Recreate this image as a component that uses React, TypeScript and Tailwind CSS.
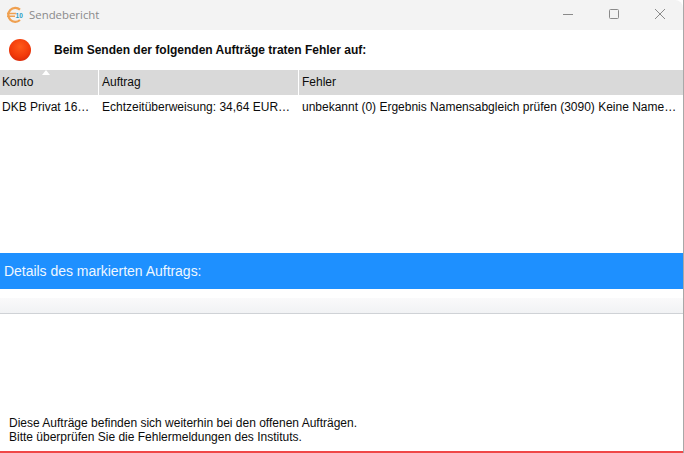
import React from "react";

function AppIcon() {
  return (
    <svg width="18" height="18" viewBox="0 0 18 18" className="shrink-0">
      <path d="M14 3.6A7 7 0 1 0 14 14" fill="none" stroke="#efa050" strokeWidth="2.2" />
      <path d="M1 7.6h9M1 10.2h8" stroke="#efa050" strokeWidth="1.5" fill="none" />
      <text x="9.6" y="12" fontSize="6.5" fontWeight="700" fill="#2a9bc4" style={{ fontFamily: '"Liberation Sans", sans-serif' }}>10</text>
    </svg>
  );
}

function Head({ w, children }: { w: string; children: React.ReactNode }) {
  return <div className={`${w} mr-[1px] shrink-0 self-stretch bg-[#d9d9d9] pl-[2px] leading-[25px]`}>{children}</div>;
}

export default function App() {
  return (
    <div
      className="relative flex h-[453px] w-[684px] flex-col overflow-hidden border-r border-[#a8a8a8] bg-white text-[12px] text-[#0c0c0c]"
      style={{ fontFamily: '"Liberation Sans", Arial, sans-serif' }}
    >
      <div className="flex h-[30px] shrink-0 items-center rounded-tr-lg bg-[#f3f3f3] pl-[6px]">
        <AppIcon />
        <span className="ml-[5px] text-[11.4px] text-[#8a8a8a]" style={{ fontFamily: '"Open Sans", sans-serif' }}>Sendebericht</span>
        <div className="ml-auto flex items-center pb-[2px]">
          <svg width="12" height="12" viewBox="0 0 12 12" className="mr-[34px]"><path d="M1 6.5h10" stroke="#8a8a8a" /></svg>
          <svg width="12" height="12" viewBox="0 0 12 12" className="mr-[34px]"><rect x="1.5" y="1.5" width="9" height="9" rx="1" fill="none" stroke="#8a8a8a" /></svg>
          <svg width="12" height="12" viewBox="0 0 12 12" className="mr-[17px]"><path d="M1 1l10 10M11 1L1 11" stroke="#8a8a8a" /></svg>
        </div>
      </div>

      <div className="flex h-[40px] shrink-0 items-center pl-[9px]">
        <div
          className="h-[22px] w-[22px] rounded-full"
          style={{ background: "radial-gradient(circle at 50% 35%, #ff5a1a 0%, #f23a0a 55%, #c81e08 100%)" }}
        />
        <span className="ml-[23px] font-bold">Beim Senden der folgenden Aufträge traten Fehler auf:</span>
      </div>

      <div className="relative flex h-[25px] shrink-0 items-center">
        <Head w="w-[98px]">Konto</Head>
        <div className="mr-[1px] w-[199px] shrink-0 self-stretch bg-[#d9d9d9] pl-[3px] leading-[25px]">Auftrag</div>
        <div className="flex-1 self-stretch bg-[#d9d9d9] pl-[3px] leading-[25px]">Fehler</div>
        <div className="absolute left-[42px] top-0 h-0 w-0 border-x-[4px] border-b-[5px] border-x-transparent border-b-white" />
      </div>

      <div className="flex h-[24px] shrink-0 items-center whitespace-nowrap">
        <div className="w-[99px] shrink-0 pl-[2px]">DKB Privat 16…</div>
        <div className="w-[200px] shrink-0 pl-[3px]">Echtzeitüberweisung: 34,64 EUR…</div>
        <div className="min-w-0 flex-1 pl-[3px]">unbekannt (0) Ergebnis Namensabgleich prüfen (3090) Keine Name…</div>
      </div>

      <div className="h-[134px] shrink-0" />

      <div className="flex h-[36px] shrink-0 items-center bg-[#1e90ff] pl-[4px] text-[14px] tracking-[-0.03px] text-[#eef7ff]">
        Details des markierten Auftrags:
      </div>

      <div className="h-[9px] shrink-0" />
      <div className="h-[16px] shrink-0 border-b border-[#cfd2d6] bg-gradient-to-b from-[#fafafb] to-[#f1f2f4]" />

      <div className="flex flex-1 flex-col justify-end pb-[7px] pl-[9px] leading-[14px]">
        <div>Diese Aufträge befinden sich weiterhin bei den offenen Aufträgen.</div>
        <div>Bitte überprüfen Sie die Fehlermeldungen des Instituts.</div>
      </div>
      <div className="h-[2px] shrink-0 bg-[#f04848]" />
    </div>
  );
}
